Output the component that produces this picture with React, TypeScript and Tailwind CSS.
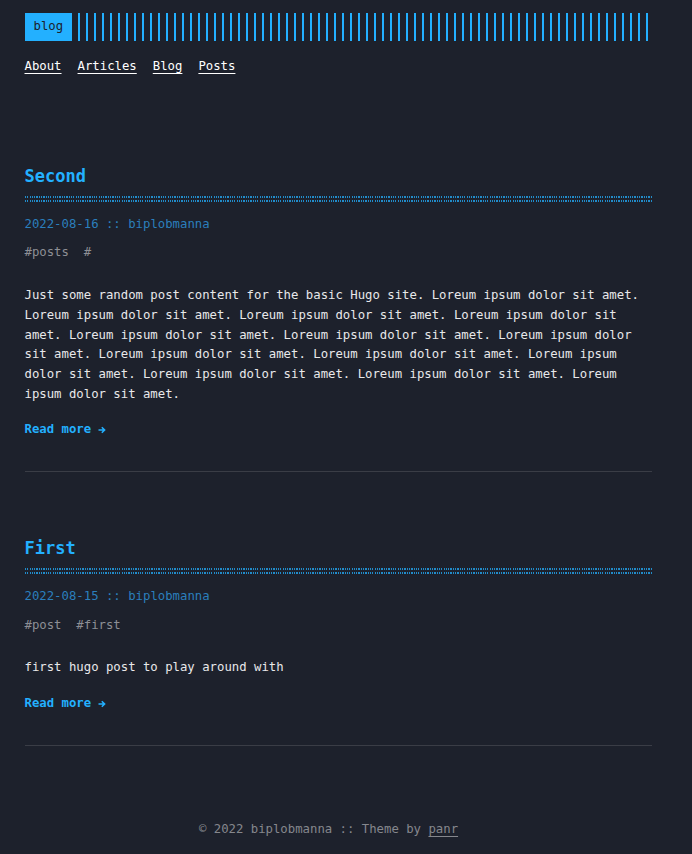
const lorem = Array(13).fill("Loreum ipsum dolor sit amet.").join(" ");

const posts = [
  {
    title: "Second",
    date: "2022-08-16",
    author: "biplobmanna",
    tags: ["#posts", "#"],
    body: "Just some random post content for the basic Hugo site. " + lorem,
  },
  {
    title: "First",
    date: "2022-08-15",
    author: "biplobmanna",
    tags: ["#post", "#first"],
    body: "first hugo post to play around with",
  },
];

function Dots() {
  return (
    <div className="mt-[9px] flex flex-col gap-[2px] opacity-75">
      <div className="h-[2px] bg-[repeating-linear-gradient(90deg,#23b0ff_0,#23b0ff_1.2px,transparent_1.2px,transparent_2.3px)]" />
      <div className="h-[2px] bg-[repeating-linear-gradient(90deg,#23b0ff_0,#23b0ff_1.2px,transparent_1.2px,transparent_2.3px)]" />
    </div>
  );
}

export default function App() {
  return (
    <div className="min-h-[854px] bg-[#1d212c] pl-[24.5px] pt-[13px] font-['DejaVu_Sans_Mono',monospace] text-[12.3px] leading-[19.7px] text-[#e8e8ea]">
      <div className="w-[627px]">
        <header>
          <div className="flex h-[28px]">
            <div className="bg-[#23b0ff] px-[9px] py-[4px] text-[#1d212c]">blog</div>
            <div className="ml-[6px] flex-1 bg-[repeating-linear-gradient(90deg,#23b0ff_0,#23b0ff_2px,transparent_2px,transparent_8px)]" />
          </div>
          <nav className="mt-[16px] flex gap-[16px]">
            {["About", "Articles", "Blog", "Posts"].map((m) => (
              <a key={m} className="text-white underline underline-offset-[3px]">
                {m}
              </a>
            ))}
          </nav>
        </header>

        <main className="mt-[88px]">
          {posts.map((p, i) => (
            <article key={p.title} className={i > 0 ? "mt-[65px]" : ""}>
              <h2 className="text-[17px] font-bold leading-[22px] text-[#23b0ff]">{p.title}</h2>
              <Dots />
              <div className="mt-[13px] text-[#2b7fbc]">
                {p.date} :: {p.author}
              </div>
              <div className="mt-[9px] flex gap-[7.4px] text-[#8d8f95]">
                {p.tags.map((t) => (
                  <span key={t}>{t}&nbsp;</span>
                ))}
              </div>
              <p className="mt-[23px]">{p.body}</p>
              <div className="mt-[16px] flex items-center font-bold text-[#23b0ff]">
                Read more
                <svg className="ml-[7px]" width="8" height="8" viewBox="0 0 8 8" fill="none" stroke="#23b0ff" strokeWidth="1.6">
                  <path d="M0.5 4H6.5M3.8 1.2L6.6 4L3.8 6.8" />
                </svg>
              </div>
              <hr className="mt-[31px] border-0 border-t border-[#3a3d46]" />
            </article>
          ))}
        </main>
      </div>

      <footer className="mt-[74px] w-[608px] text-center text-[#85878d]">
        © 2022 biplobmanna :: Theme by <span className="underline underline-offset-[3px]">panr</span>
      </footer>
    </div>
  );
}
